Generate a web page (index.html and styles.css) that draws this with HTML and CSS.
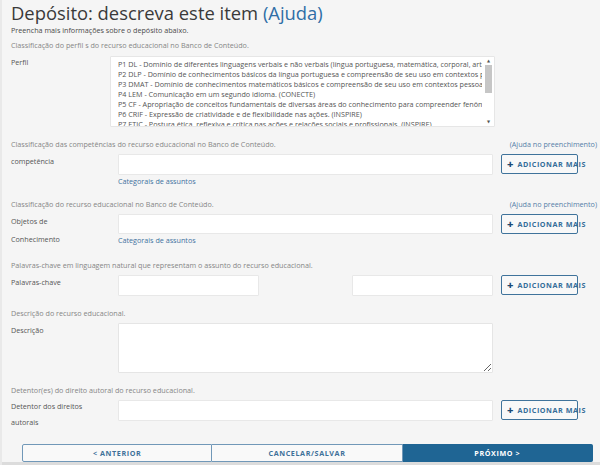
FILE: index.html
```html
<!DOCTYPE html>
<html lang="pt">
<head>
<meta charset="utf-8">
<title>Depósito</title>
<link rel="stylesheet" href="styles.css">
</head>
<body>
<main class="page">
  <h1 class="title">Depósito: descreva este item <a class="title-help" href="#">(Ajuda)</a></h1>
  <p class="lead">Preencha mais informações sobre o depósito abaixo.</p>

  <section class="field field-first">
    <div class="hint-row"><p class="hint">Classificação do perfil s do recurso educacional no Banco de Conteúdo.</p></div>
    <div class="row">
      <label class="label">Perfil</label>
      <div class="listbox">
        <div class="options">
          <div class="opt">P1 DL - Domínio de diferentes linguagens verbais e não verbais (língua portuguesa, matemática, corporal, artística, digital). (CONECTE)</div>
          <div class="opt">P2 DLP - Domínio de conhecimentos básicos da língua portuguesa e compreensão de seu uso em contextos pessoais e profissionais. (CONECTE)</div>
          <div class="opt">P3 DMAT - Domínio de conhecimentos matemáticos básicos e compreensão de seu uso em contextos pessoais e profissionais. (CONECTE)</div>
          <div class="opt">P4 LEM - Comunicação em um segundo idioma. (CONECTE)</div>
          <div class="opt">P5 CF - Apropriação de conceitos fundamentais de diversas áreas do conhecimento para compreender fenômenos. (INSPIRE)</div>
          <div class="opt">P6 CRIF - Expressão de criatividade e de flexibilidade nas ações. (INSPIRE)</div>
          <div class="opt">P7 ETIC - Postura ética, reflexiva e crítica nas ações e relações sociais e profissionais. (INSPIRE)</div>
        </div>
        <div class="scrollbar">
          <span class="arrow">&#9650;</span>
          <span class="thumb"></span>
          <span class="track"></span>
          <span class="arrow">&#9660;</span>
        </div>
      </div>
    </div>
  </section>

  <section class="field">
    <div class="hint-row"><p class="hint">Classificação das competências do recurso educacional no Banco de Conteúdo.</p><a class="help" href="#">(Ajuda no preenchimento)</a></div>
    <div class="row">
      <label class="label">competência</label>
      <div class="control">
        <input class="input" type="text">
        <a class="sublink" href="#">Categorais de assuntos</a>
      </div>
      <button class="add" type="button"><span class="plus">+</span>ADICIONAR MAIS</button>
    </div>
  </section>

  <section class="field">
    <div class="hint-row"><p class="hint">Classificação do recurso educacional no Banco de Conteúdo.</p><a class="help" href="#">(Ajuda no preenchimento)</a></div>
    <div class="row">
      <label class="label">Objetos de Conhecimento</label>
      <div class="control">
        <input class="input input-short" type="text">
        <a class="sublink" href="#">Categorais de assuntos</a>
      </div>
      <button class="add" type="button"><span class="plus">+</span>ADICIONAR MAIS</button>
    </div>
  </section>

  <section class="field">
    <div class="hint-row"><p class="hint">Palavras-chave em linguagem natural que representam o assunto do recurso educacional.</p></div>
    <div class="row">
      <label class="label">Palavras-chave</label>
      <div class="control control-split">
        <input class="input" type="text">
        <input class="input" type="text">
      </div>
      <button class="add" type="button"><span class="plus">+</span>ADICIONAR MAIS</button>
    </div>
  </section>

  <section class="field">
    <div class="hint-row"><p class="hint">Descrição do recurso educacional.</p></div>
    <div class="row">
      <label class="label">Descrição</label>
      <div class="control">
        <textarea class="textarea"></textarea>
      </div>
    </div>
  </section>

  <section class="field">
    <div class="hint-row"><p class="hint">Detentor(es) do direito autoral do recurso educacional.</p></div>
    <div class="row">
      <label class="label label-tight">Detentor dos direitos autorais</label>
      <div class="control">
        <input class="input" type="text">
      </div>
      <button class="add" type="button"><span class="plus">+</span>ADICIONAR MAIS</button>
    </div>
  </section>

  <nav class="pager">
    <button class="pg" type="button">&lt; ANTERIOR</button>
    <button class="pg" type="button">CANCELAR/SALVAR</button>
    <button class="pg pg-primary" type="button">PRÓXIMO &gt;</button>
  </nav>
</main>
<div class="footer-strip"></div>
</body>
</html>
```

FILE: styles.css
```css
* { box-sizing: border-box; }

html, body {
  margin: 0;
  padding: 0;
  background: #f5f5f5;
}

body {
  font-family: "Open Sans", "DejaVu Sans", sans-serif;
  color: #555;
  overflow: hidden;
  height: 465px;
  border-left: 2px solid #e9e9e9;
}

.page {
  padding: 0 3px 0 9px;
}

.title {
  margin: 1px 0 0;
  font-size: 18.4px;
  line-height: 23px;
  font-weight: 400;
  color: #3a3a3a;
  white-space: nowrap;
}

.title-help {
  color: #2f6ea6;
  text-decoration: none;
}

.lead {
  margin: 0;
  font-size: 7.2px;
  line-height: 12px;
  color: #4a4a4a;
}

.field {
  margin-top: 11px;
}

.field-first {
  margin-top: 3px;
}

.hint-row {
  display: flex;
  justify-content: space-between;
  align-items: center;
  height: 12px;
}

.hint {
  margin: 0;
  font-size: 7.2px;
  line-height: 12px;
  color: #868686;
  white-space: nowrap;
}

.help {
  font-size: 7.2px;
  line-height: 12px;
  color: #5580a8;
  text-decoration: none;
  white-space: nowrap;
}

.row {
  display: grid;
  grid-template-columns: 99px 375px 77px;
  column-gap: 8px;
  align-items: start;
  margin-top: 4px;
}

.field-first .row {
  margin-top: 5px;
}

.label {
  max-width: 76px;
  font-size: 7.2px;
  line-height: 18px;
  margin-top: -2px;
  color: #555;
}

.field-first .label {
  line-height: 12px;
  margin-top: 0;
}

.label-tight {
  line-height: 16px;
}

.control {
  display: flex;
  flex-direction: column;
}

.control-split {
  flex-direction: row;
  justify-content: space-between;
}

.control-split .input {
  width: 141px;
}

.input {
  display: block;
  width: 375px;
  height: 21px;
  margin: 0;
  border: 1px solid #e8e8e8;
  border-radius: 1px;
  background: #fff;
  font: inherit;
}

.input-short {
  height: 20px;
}

.textarea {
  display: block;
  width: 375px;
  height: 50px;
  margin: 0;
  border: 1px solid #e5e5e5;
  border-radius: 1px;
  background: #fff;
  font: inherit;
}

.sublink {
  font-size: 7.2px;
  line-height: 12px;
  margin-top: 0;
  color: #41729f;
  text-decoration: none;
}

/* Perfil list box */
.listbox {
  display: flex;
  margin-left: -8px;
  width: 385px;
  height: 71px;
  background: #fff;
  border: 1px solid #e6e6e6;
  border-radius: 1px;
}

.options {
  flex: 1;
  overflow: hidden;
  padding: 2px 2px 0 7px;
}

.opt {
  font-size: 7.2px;
  line-height: 10px;
  color: #555;
  white-space: nowrap;
  overflow: hidden;
}

.scrollbar {
  width: 9px;
  margin-right: 1px;
  display: flex;
  flex-direction: column;
  align-items: center;
}

.arrow {
  font-size: 4px;
  line-height: 8px;
  color: #555;
  height: 8px;
}

.thumb {
  width: 7px;
  height: 28px;
  background: #c6c6c6;
}

.track {
  flex: 1;
}

/* add button */
.add {
  display: flex;
  align-items: center;
  width: 77px;
  height: 20px;
  padding: 0 0 0 5px;
  margin: 0;
  border: 1px solid #3f739b;
  border-radius: 2px;
  background: #f8f8f8;
  font-family: "Open Sans", "DejaVu Sans", sans-serif;
  font-size: 7.2px;
  font-weight: 700;
  letter-spacing: 0.55px;
  color: #356d98;
  white-space: nowrap;
  overflow: visible;
}

.plus {
  font-size: 11px;
  line-height: 10px;
  font-weight: 800;
  color: #1d4a72;
  margin-right: 4px;
  letter-spacing: 0;
}

/* pager */
.pager {
  display: grid;
  grid-template-columns: 1fr 1fr 1fr;
  margin: 14px 4px 0 11px;
}

.pg {
  height: 18px;
  margin: 0;
  border: 1px solid #7198b8;
  background: #f9f9f9;
  font-family: "Open Sans", "DejaVu Sans", sans-serif;
  font-size: 7.2px;
  font-weight: 700;
  letter-spacing: 0.6px;
  color: #3f7199;
  padding: 0;
}

.pg:first-child {
  border-radius: 2px 0 0 2px;
}

.pg + .pg {
  border-left: 0;
}

.pg-primary {
  background: #1f6594;
  border-color: #1f6594;
  color: #fff;
  border-radius: 0 2px 2px 0;
}

.footer-strip {
  height: 20px;
  background: #dcdcdc;
}
```
